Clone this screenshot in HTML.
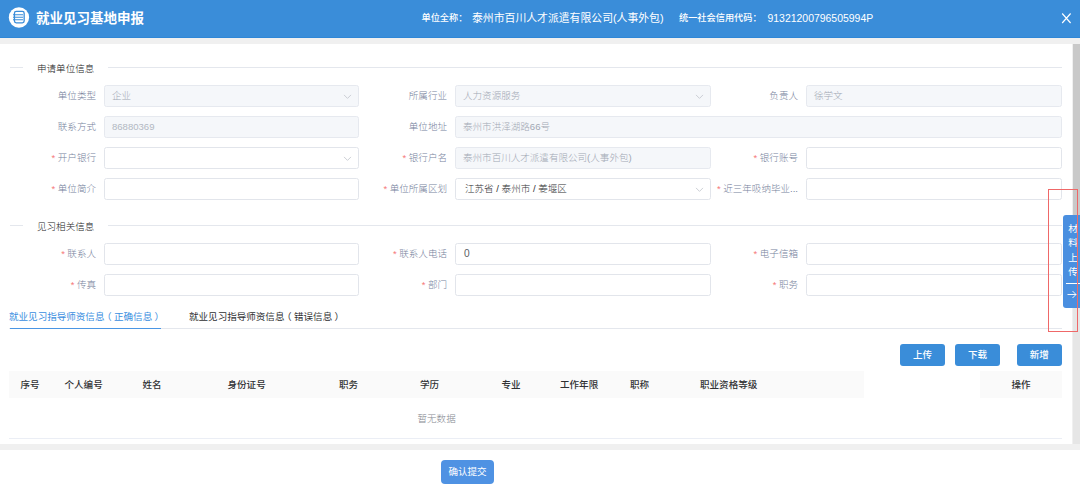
<!DOCTYPE html>
<html lang="zh-CN">
<head>
<meta charset="utf-8">
<title>就业见习基地申报</title>
<style>
*{box-sizing:border-box;margin:0;padding:0}
html,body{width:1080px;height:494px;overflow:hidden;background:#fff;font-family:"Liberation Sans","Noto Sans CJK SC",sans-serif;}
body{position:relative;font-size:9.56px;color:#606266}
.abs{position:absolute}
#hdr{left:0;top:0;width:1080px;height:38px;background:#3a8dd9;color:#fff;box-shadow:inset 0 -1px 0 #2f87d7}
#title{left:36px;top:0.8px;height:38px;line-height:36px;font-size:13.5px;font-weight:bold;white-space:nowrap;color:#fff}
.hl{top:0;height:38px;line-height:37px;white-space:nowrap;color:#fff}
.hl.s{font-size:9.2px;font-weight:500}
.hl.b{font-size:10.85px}
#greybg{left:0;top:38px;width:1080px;height:412px;background:#f0f0f0}
#panel{left:0;top:44px;width:1072px;height:400px;background:#fff}
#track{left:1072.5px;top:44px;width:7.5px;height:400.3px;background:#e6e6e6}
#thumb{left:1072.5px;top:44px;width:7.5px;height:255px;background:#c9c9c9}
.div{height:1px;background:#e4e7ed}
.sect{font-weight:300;font-size:9.56px;color:#222;white-space:nowrap;line-height:12px;height:12px}
.lab{font-weight:300;width:96px;text-align:right;padding-right:8.5px;height:22px;line-height:22px;color:#76829c;white-space:nowrap;font-size:9.56px}
.lab i{color:#f67878;font-style:normal;margin-right:2.5px}
.inp{font-weight:300;width:255px;height:22px;border:1px solid #e2e5eb;border-radius:2.5px;background:#fff;line-height:20px;padding-left:7px;font-size:9.56px;color:#303133;white-space:nowrap;overflow:hidden}
.inp.dis{background:#f5f7fa;border-color:#e6e9ef;color:#a2a8b4}
.arrow{right:6.5px;top:6px;width:9px;height:9px}
.btn{height:22px;line-height:22px;background:#3a8dd9;color:#fff;border-radius:3px;text-align:center;font-size:9.56px;font-weight:500;white-space:nowrap}
.th{top:371px;height:27px;line-height:27.5px;font-weight:500;color:#303133;font-size:9.56px;white-space:nowrap}
.pl{position:relative;left:-2.4px}.pr{position:relative;left:2.4px}
</style>
</head>
<body>
<div id="hdr" class="abs"></div>
<svg class="abs" style="left:8px;top:7px" width="22" height="21" viewBox="0 0 22 21"><circle cx="10.95" cy="10.5" r="10.15" fill="#fff"/><rect x="6.45" y="4.45" width="9.7" height="11.4" rx="1.8" fill="none" stroke="#3a8dd9" stroke-width="1.3"/><path d="M5 7.75h10M5 10.25h10M5 12.75h10" stroke="#3a8dd9" stroke-width="1" fill="none"/></svg>
<div id="title" class="abs">就业见习基地申报</div>
<div class="abs hl s" style="left:421.5px">单位全称：</div>
<div class="abs hl b" style="left:472px">泰州市百川人才派遣有限公司(人事外包)</div>
<div class="abs hl s" style="left:679px">统一社会信用代码：</div>
<div class="abs hl b" style="left:767.5px;font-size:10.45px">91321200796505994P</div>
<svg class="abs" style="left:1061px;top:12px" width="11" height="12" viewBox="0 0 11 12"><path d="M1.2 1.5L9.6 11M9.6 1.5L1.2 11" stroke="#fff" stroke-width="1.15" fill="none"/></svg>

<div id="greybg" class="abs"></div>
<div id="panel" class="abs"></div>
<div id="track" class="abs"></div>
<div id="thumb" class="abs"></div>

<!-- section 1 -->
<div class="abs div" style="left:9.5px;top:66.5px;width:13.5px"></div>
<div class="abs sect" style="left:37px;top:62.5px">申请单位信息</div>
<div class="abs div" style="left:107.5px;top:66.5px;width:954.5px"></div>

<!-- section 2 -->
<div class="abs div" style="left:9.5px;top:224.5px;width:13.5px"></div>
<div class="abs sect" style="left:37px;top:220.5px">见习相关信息</div>
<div class="abs div" style="left:107.5px;top:224.5px;width:954.5px"></div>

<div id="form">
<div class="abs lab" style="left:8.5px;top:85px">单位类型</div>
<div class="abs inp dis" style="left:104px;top:85px;width:255px">企业<svg class="abs arrow" viewBox="0 0 9 9"><path d="M1 2.9L4.5 6.4L8 2.9" stroke="#c0c4cc" stroke-width="0.8" fill="none"/></svg></div>
<div class="abs lab" style="left:359.5px;top:85px">所属行业</div>
<div class="abs inp dis" style="left:455px;top:85px;width:256px">人力资源服务<svg class="abs arrow" viewBox="0 0 9 9"><path d="M1 2.9L4.5 6.4L8 2.9" stroke="#c0c4cc" stroke-width="0.8" fill="none"/></svg></div>
<div class="abs lab" style="left:710.5px;top:85px">负责人</div>
<div class="abs inp dis" style="left:806px;top:85px;width:256px">徐学文</div>
<div class="abs lab" style="left:8.5px;top:116px">联系方式</div>
<div class="abs inp dis" style="left:104px;top:116px;width:255px;color:#b2b7c2">86880369</div>
<div class="abs lab" style="left:359.5px;top:116px">单位地址</div>
<div class="abs inp dis" style="left:455px;top:116px;width:607px">泰州市洪泽湖路66号</div>
<div class="abs lab" style="left:8.5px;top:147px"><i>*</i>开户银行</div>
<div class="abs inp" style="left:104px;top:147px;width:255px"><svg class="abs arrow" viewBox="0 0 9 9"><path d="M1 2.9L4.5 6.4L8 2.9" stroke="#c0c4cc" stroke-width="0.8" fill="none"/></svg></div>
<div class="abs lab" style="left:359.5px;top:147px"><i>*</i>银行户名</div>
<div class="abs inp dis" style="left:455px;top:147px;width:256px">泰州市百川人才派遣有限公司(人事外包)</div>
<div class="abs lab" style="left:710.5px;top:147px"><i>*</i>银行账号</div>
<div class="abs inp" style="left:806px;top:147px;width:256px"></div>
<div class="abs lab" style="left:8.5px;top:178px"><i>*</i>单位简介</div>
<div class="abs inp" style="left:104px;top:178px;width:255px"></div>
<div class="abs lab" style="left:359.5px;top:178px"><i>*</i>单位所属区划</div>
<div class="abs inp" style="left:455px;top:178px;width:256px;padding-left:9px">江苏省 / 泰州市 / 姜堰区<svg class="abs arrow" viewBox="0 0 9 9"><path d="M1 2.9L4.5 6.4L8 2.9" stroke="#c0c4cc" stroke-width="0.8" fill="none"/></svg></div>
<div class="abs lab" style="left:710.5px;top:178px"><i>*</i>近三年吸纳毕业...</div>
<div class="abs inp" style="left:806px;top:178px;width:256px"></div>
<div class="abs lab" style="left:8.5px;top:243px"><i>*</i>联系人</div>
<div class="abs inp" style="left:104px;top:243px;width:255px"></div>
<div class="abs lab" style="left:359.5px;top:243px"><i>*</i>联系人电话</div>
<div class="abs inp" style="left:455px;top:243px;width:256px;font-size:10.2px;color:#5a5e66;font-weight:400;padding-left:8px">0</div>
<div class="abs lab" style="left:710.5px;top:243px"><i>*</i>电子信箱</div>
<div class="abs inp" style="left:806px;top:243px;width:256px"></div>
<div class="abs lab" style="left:8.5px;top:274px"><i>*</i>传真</div>
<div class="abs inp" style="left:104px;top:274px;width:255px"></div>
<div class="abs lab" style="left:359.5px;top:274px"><i>*</i>部门</div>
<div class="abs inp" style="left:455px;top:274px;width:256px"></div>
<div class="abs lab" style="left:710.5px;top:274px"><i>*</i>职务</div>
<div class="abs inp" style="left:806px;top:274px;width:256px"></div>
</div>

<!-- tabs -->
<div class="abs div" style="left:9px;top:327.5px;width:1053px;background:#e4e7ed"></div>
<div class="abs" style="left:9.5px;top:327.5px;width:151.5px;height:1.3px;background:#4a96e4"></div>
<div class="abs" style="left:9px;top:310px;line-height:13px;font-size:9.56px;color:#3a8ee0;white-space:nowrap">就业见习指导师资信息<span class="pl">（</span>正确信息<span class="pr">）</span></div>
<div class="abs" style="left:189px;top:310px;line-height:13px;font-size:9.56px;color:#303133;white-space:nowrap">就业见习指导师资信息<span class="pl">（</span>错误信息<span class="pr">）</span></div>

<!-- buttons -->
<div class="abs btn" style="left:900px;top:344px;width:45px">上传</div>
<div class="abs btn" style="left:955px;top:344px;width:45px">下载</div>
<div class="abs btn" style="left:1017px;top:344px;width:44.5px">新增</div>

<!-- table -->
<div class="abs" style="left:9px;top:371px;width:855px;height:27px;background:#fafafa"></div>
<div class="abs" style="left:980px;top:371px;width:81.5px;height:27px;background:#fafafa"></div>
<div class="abs th" style="left:20.5px">序号</div>
<div class="abs th" style="left:64.5px">个人编号</div>
<div class="abs th" style="left:142.5px">姓名</div>
<div class="abs th" style="left:227.5px">身份证号</div>
<div class="abs th" style="left:339px">职务</div>
<div class="abs th" style="left:420px">学历</div>
<div class="abs th" style="left:501.5px">专业</div>
<div class="abs th" style="left:560px">工作年限</div>
<div class="abs th" style="left:630px">职称</div>
<div class="abs th" style="left:700px">职业资格等级</div>
<div class="abs th" style="left:1011.5px">操作</div>
<div class="abs" style="left:417.5px;top:412px;line-height:14px;font-size:9.56px;color:#85888f;font-weight:300;white-space:nowrap">暂无数据</div>
<div class="abs div" style="left:9px;top:438px;width:1052.5px;background:#ebeef5"></div>

<!-- footer -->
<div class="abs btn" style="left:441px;top:460px;width:53px;height:23.7px;line-height:23.5px;border-radius:4px;background:#4f92e3;font-weight:400">确认提交</div>

<!-- side tab -->
<div class="abs" style="left:1063px;top:214.5px;width:17px;height:93px;background:#4a8fe0;border-radius:3px 0 0 3px"></div>
<div class="abs" style="left:1068px;top:222px;width:10px;line-height:14.3px;font-size:9.56px;color:#fff;text-align:center">材<br>料<br>上<br>传</div>
<div class="abs" style="left:1066px;top:282.5px;width:14px;height:1px;background:#fff"></div>
<svg class="abs" style="left:1067px;top:290px" width="10" height="9" viewBox="0 0 10 9"><path d="M0.5 4.5H9M5.5 1L9 4.5L5.5 8" stroke="#fff" stroke-width="0.9" fill="none"/></svg>
<div class="abs" style="left:1048px;top:189px;width:29.5px;height:143px;border:1px solid #ef6868"></div>
</body>
</html>
